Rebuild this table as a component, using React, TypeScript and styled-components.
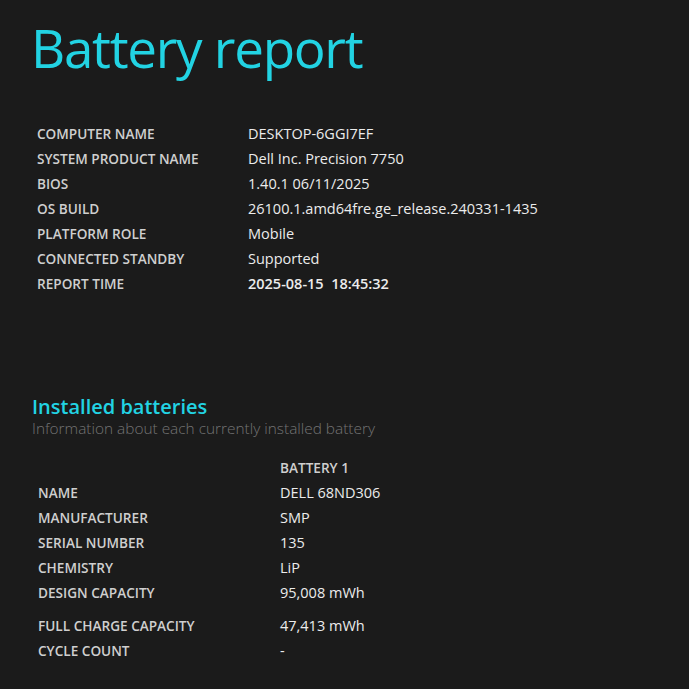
import React from 'react';
import styled, { createGlobalStyle } from 'styled-components';

const GlobalStyle = createGlobalStyle`
  html, body {
    margin: 0;
    padding: 0;
    background: #1b1b1b;
  }
  body {
    font-family: "Open Sans", "Noto Sans", sans-serif;
    color: #e8e8e8;
  }
`;

const Page = styled.div`
  width: 689px;
  height: 689px;
  overflow: hidden;
  background: #1b1b1b;
  padding: 10px 0 0 32px;
  box-sizing: border-box;
`;

const Title = styled.h1`
  margin: 0 0 0 -1px;
  font-size: 53px;
  font-weight: 400;
  line-height: 76px;
  color: #22d3e3;
  letter-spacing: -1.3px;
`;

const InfoTable = styled.div<{ indent: number }>`
  display: flex;
  flex-direction: column;
  padding-left: ${p => p.indent}px;
`;

const Row = styled.div<{ labelWidth: number; spaced?: boolean }>`
  display: grid;
  grid-template-columns: ${p => p.labelWidth}px 1fr;
  align-items: center;
  height: 25px;
  padding-top: ${p => (p.spaced ? '8px' : '0')};
`;

const Label = styled.div`
  font-size: 13.6px;
  font-weight: 600;
  color: #cfcfcf;
  text-transform: uppercase;
  white-space: nowrap;
`;

const Value = styled.div<{ strong?: boolean }>`
  font-size: 14.5px;
  color: #ececec;
  font-weight: ${p => (p.strong ? 600 : 400)};
  white-space: pre;
`;

const SystemSection = styled.section`
  margin-top: 35px;
`;

const BatterySection = styled.section`
  margin-top: 98px;
`;

const SectionTitle = styled.h2`
  margin: 0;
  font-size: 20px;
  font-weight: 600;
  line-height: 26px;
  color: #22d3e3;
`;

const SectionSub = styled.div`
  font-size: 15.4px;
  font-weight: 300;
  color: #737373;
  line-height: 22px;
  margin: -2px 0 15px;
`;

const systemRows: [string, string][] = [
  ['Computer name', 'DESKTOP-6GGI7EF'],
  ['System product name', 'Dell Inc. Precision 7750'],
  ['BIOS', '1.40.1 06/11/2025'],
  ['OS build', '26100.1.amd64fre.ge_release.240331-1435'],
  ['Platform role', 'Mobile'],
  ['Connected standby', 'Supported'],
  ['Report time', '2025-08-15  18:45:32'],
];

const batteryRows: [string, string][] = [
  ['Name', 'DELL 68ND306'],
  ['Manufacturer', 'SMP'],
  ['Serial number', '135'],
  ['Chemistry', 'LiP'],
  ['Design capacity', '95,008 mWh'],
  ['Full charge capacity', '47,413 mWh'],
  ['Cycle count', '-'],
];

export default function App() {
  return (
    <>
      <GlobalStyle />
      <Page>
        <Title>Battery report</Title>

        <SystemSection>
          <InfoTable indent={5}>
            {systemRows.map(([label, value], i) => (
              <Row key={label} labelWidth={211}>
                <Label>{label}</Label>
                <Value strong={i === systemRows.length - 1}>{value}</Value>
              </Row>
            ))}
          </InfoTable>
        </SystemSection>

        <BatterySection>
          <SectionTitle>Installed batteries</SectionTitle>
          <SectionSub>Information about each currently installed battery</SectionSub>
          <InfoTable indent={6}>
            <Row labelWidth={242}>
              <span />
              <Label>Battery 1</Label>
            </Row>
            {batteryRows.map(([label, value]) => (
              <Row key={label} labelWidth={242} spaced={label === 'Full charge capacity'}>
                <Label>{label}</Label>
                <Value>{value}</Value>
              </Row>
            ))}
          </InfoTable>
        </BatterySection>
      </Page>
    </>
  );
}
